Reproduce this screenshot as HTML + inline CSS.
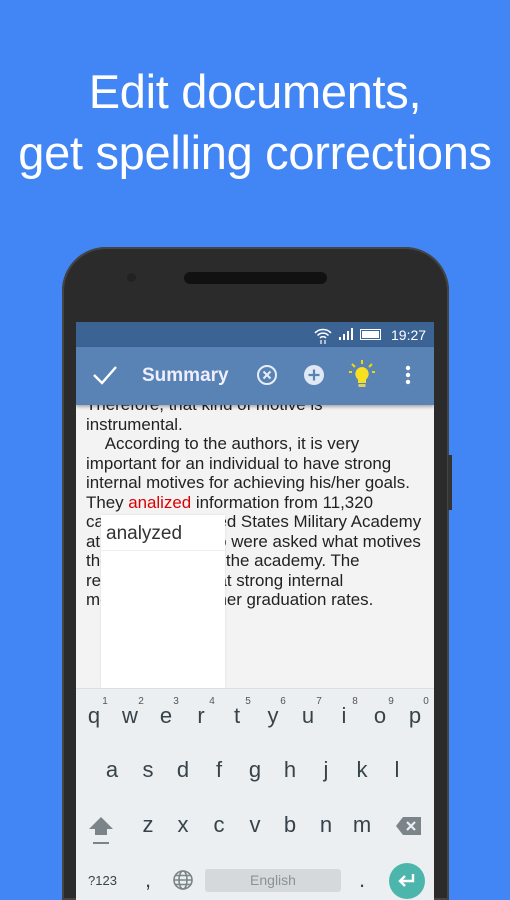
<!DOCTYPE html>
<html style="overflow:hidden;width:510px;height:900px"><head><meta charset="utf-8"><style>
*{margin:0;padding:0;box-sizing:border-box}
body{width:510px;height:900px;background:#4285f4;position:relative;overflow:hidden;font-family:"Liberation Sans",sans-serif}
.h{position:absolute;left:0;width:510px;text-align:center;color:#fff;font-size:47px;line-height:56px;letter-spacing:-0.3px}
.phone{position:absolute;left:62px;top:247px;width:387px;height:653px;background:#2b2b2b;border-radius:44px 44px 0 0;box-shadow:inset 0 0 0 2px #444}
.btn{position:absolute;left:448px;top:455px;width:4px;height:55px;background:#333}
.spk{position:absolute;left:184px;top:272px;width:143px;height:12px;background:#111;border-radius:6px}
.cam{position:absolute;left:127px;top:273px;width:9px;height:9px;background:#222;border-radius:50%}
.scr{position:absolute;left:76px;top:322px;width:358px;height:578px;background:#f3f3f3;overflow:hidden}
.sb{position:absolute;left:0;top:0;width:358px;height:25px;background:#3b6394;color:#fff;font-size:14px}
.tb{position:absolute;left:0;top:25px;width:358px;height:58px;background:#5a83b5;box-shadow:0 2px 3px rgba(0,0,0,.3)}
.txt{position:absolute;left:10px;top:75px;width:348px;font-size:16.9px;line-height:19.5px;color:#222;white-space:nowrap}
.pop{position:absolute;left:25px;top:193px;width:124px;height:173px;background:#fff;box-shadow:0 0 2px rgba(0,0,0,.1)}
.kb{position:absolute;left:0;top:366px;width:358px;height:212px;background:#eceff1;border-top:1px solid #dcdfe1}
.k{position:absolute;font-size:22px;color:#37434a;transform:translateX(-50%)}
.n{position:absolute;font-size:10px;color:#555;transform:translateX(-50%)}
</style></head><body>
<div class="h" style="top:64px">Edit documents,</div>
<div class="h" style="top:125px">get spelling corrections</div>
<div class="phone"></div><div class="btn"></div>
<div class="spk"></div><div class="cam"></div>
<div class="scr">
<div class="txt">
<div style="margin-top:-2px">Therefore, that kind of motive is</div>
<div>instrumental.</div>
<div>&nbsp;&nbsp;&nbsp;&nbsp;According to the authors, it is very</div>
<div>important for an individual to have strong</div>
<div>internal motives for achieving his/her goals.</div>
<div>They <span style="color:#d00">analized</span> information from 11,320</div>
<div>cadets at the United States Military Academy</div>
<div>at West Point, who were asked what motives</div>
<div>they had to attend the academy. The</div>
<div>results showed that strong internal</div>
<div>motives led to higher graduation rates.</div>
</div>
<div class="pop"><div style="font-size:19px;color:#333;padding:8px 0 0 5px;height:36px;border-bottom:1px solid #eee">analyzed</div></div>
<div class="sb">
<svg style="position:absolute;left:237px;top:3px" width="20" height="20" viewBox="0 0 20 20" fill="none" stroke="#fff" stroke-width="1.5"><path d="M2 8a11 11 0 0 1 16 0M4.5 10.5a7.5 7.5 0 0 1 11 0M7 13a4 4 0 0 1 6 0"/><path d="M8 19v-4M12 15v4" stroke-width="1.2"/></svg>
<svg style="position:absolute;left:262px;top:6px" width="15" height="13"><path d="M1 12h2V9H1zM5 12h2V6H5zM9 12h2V3H9zM13 12h2V0h-2z" fill="#fff"/></svg>
<div style="position:absolute;left:284px;top:7px;width:21px;height:11px;border:1.5px solid #fff;padding:1px"><div style="background:#fff;height:100%"></div></div>
<div style="position:absolute;left:315px;top:5px">19:27</div>
</div>
<div class="tb">
<svg style="position:absolute;left:16px;top:17px" width="26" height="22"><path d="M2 11l8 8L24 3" stroke="#fff" stroke-width="2.4" fill="none"/></svg>
<div style="position:absolute;left:66px;top:18px;color:#eef;font-size:19px;font-weight:bold">Summary</div>
<svg style="position:absolute;left:180px;top:17px" width="22" height="22"><circle cx="11" cy="11" r="9" stroke="#e8eef8" stroke-width="2" fill="none"/><path d="M7.5 7.5l7 7M14.5 7.5l-7 7" stroke="#e8eef8" stroke-width="2"/></svg>
<svg style="position:absolute;left:227px;top:17px" width="22" height="22"><circle cx="11" cy="11" r="10" fill="#e0e8f4"/><path d="M11 5.5v11M5.5 11h11" stroke="#5a83b5" stroke-width="2.2"/></svg>
<svg style="position:absolute;left:272px;top:12px" width="28" height="30"><path d="M14 1v4M4 5l3 3M24 5l-3 3M1 13h3M24 13h3" stroke="#f5d800" stroke-width="2"/><path d="M14 8a7 7 0 0 0-4 12.5V24h8v-3.5A7 7 0 0 0 14 8z" fill="#f8e020"/><rect x="10.5" y="25" width="7" height="3" fill="#d8d070"/></svg>
<svg style="position:absolute;left:329px;top:18px" width="6" height="20"><circle cx="3" cy="3" r="2.2" fill="#fff"/><circle cx="3" cy="10" r="2.2" fill="#fff"/><circle cx="3" cy="17" r="2.2" fill="#fff"/></svg>
</div>
<div class="kb">
<div class="n" style="left:29px;top:7px">1</div><div class="n" style="left:65px;top:7px">2</div><div class="n" style="left:100px;top:7px">3</div><div class="n" style="left:136px;top:7px">4</div><div class="n" style="left:172px;top:7px">5</div><div class="n" style="left:207px;top:7px">6</div><div class="n" style="left:243px;top:7px">7</div><div class="n" style="left:279px;top:7px">8</div><div class="n" style="left:315px;top:7px">9</div><div class="n" style="left:350px;top:7px">0</div>
<div class="k" style="left:18px;top:14px">q</div><div class="k" style="left:54px;top:14px">w</div><div class="k" style="left:90px;top:14px">e</div><div class="k" style="left:125px;top:14px">r</div><div class="k" style="left:161px;top:14px">t</div><div class="k" style="left:197px;top:14px">y</div><div class="k" style="left:232px;top:14px">u</div><div class="k" style="left:268px;top:14px">i</div><div class="k" style="left:304px;top:14px">o</div><div class="k" style="left:339px;top:14px">p</div>
<div class="k" style="left:36px;top:68px">a</div><div class="k" style="left:72px;top:68px">s</div><div class="k" style="left:107px;top:68px">d</div><div class="k" style="left:143px;top:68px">f</div><div class="k" style="left:179px;top:68px">g</div><div class="k" style="left:214px;top:68px">h</div><div class="k" style="left:250px;top:68px">j</div><div class="k" style="left:286px;top:68px">k</div><div class="k" style="left:321px;top:68px">l</div>
<div class="k" style="left:72px;top:123px">z</div><div class="k" style="left:107px;top:123px">x</div><div class="k" style="left:143px;top:123px">c</div><div class="k" style="left:179px;top:123px">v</div><div class="k" style="left:214px;top:123px">b</div><div class="k" style="left:250px;top:123px">n</div><div class="k" style="left:286px;top:123px">m</div>
<svg style="position:absolute;left:13px;top:128px" width="24" height="30"><path d="M12 0L0 12h6v6h12v-6h6z" fill="#7b8488"/><rect x="4" y="25" width="16" height="2" fill="#7b8488"/></svg>
<svg style="position:absolute;left:320px;top:128px" width="25" height="18"><path d="M7 0h18v18H7L0 9z" fill="#7b8488"/><path d="M11 5l8 8M19 5l-8 8" stroke="#eceff1" stroke-width="2.2"/></svg>
<div style="position:absolute;left:12px;top:184px;font-size:13px;color:#37434a">?123</div>
<div class="k" style="left:72px;top:178px">,</div>
<svg style="position:absolute;left:97px;top:181px" width="20" height="20" fill="none" stroke="#7b8488" stroke-width="1.6"><circle cx="10" cy="10" r="9"/><ellipse cx="10" cy="10" rx="4" ry="9"/><path d="M1 10h18M2.5 5.5h15M2.5 14.5h15"/></svg>
<div style="position:absolute;left:129px;top:180px;width:136px;height:23px;background:#d5d9dc;border-radius:3px;text-align:center;font-size:14px;line-height:23px;color:#8a9296">English</div>
<div class="k" style="left:286px;top:178px">.</div>
<div style="position:absolute;left:313px;top:174px;width:36px;height:36px;border-radius:50%;background:#4db6ac"></div>
<svg style="position:absolute;left:321px;top:184px" width="20" height="16"><path d="M16 1v7H4M8 3L3 8l5 5" stroke="#fff" stroke-width="2.4" fill="none"/></svg>
</div>
</div>
</body></html>
